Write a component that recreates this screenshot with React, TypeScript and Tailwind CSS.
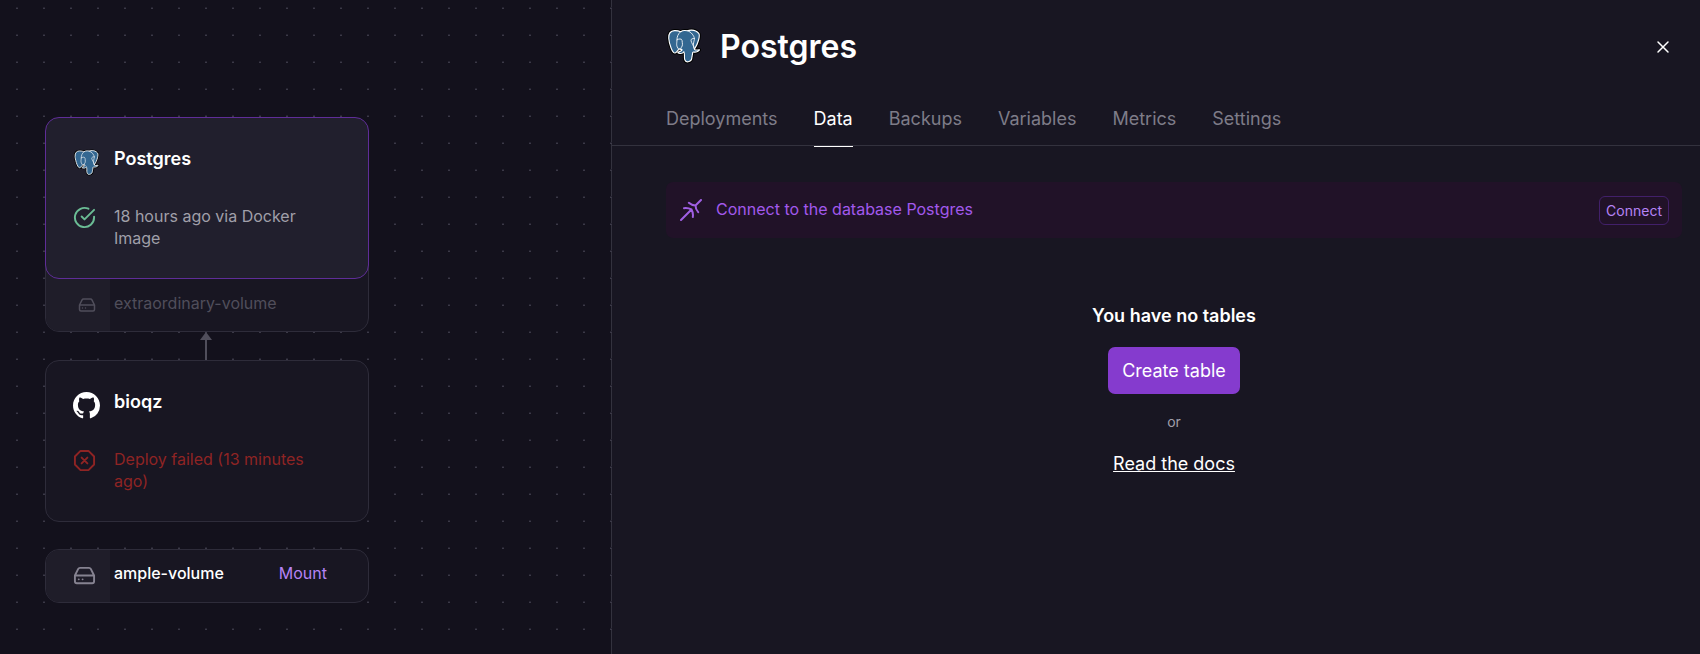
import React from "react";

function PostgresLogo({ className }: { className: string }) {
  const body =
    "M115.731 77.44c-13.925 2.873-14.882-1.842-14.882-1.842 14.703-21.816 20.849-49.51 15.545-56.287-14.47-18.489-39.518-9.746-39.936-9.52l-.134.024c-2.751-.571-5.83-.911-9.291-.967-6.301-.103-11.08 1.652-14.707 4.402 0 0-44.684-18.408-42.605 23.151.442 8.842 12.672 66.899 27.26 49.363 5.332-6.412 10.483-11.834 10.483-11.834 2.559 1.699 5.622 2.567 8.833 2.255l.25-.212c-.078.796-.042 1.575.1 2.497-3.757 4.199-2.653 4.936-10.166 6.482-7.602 1.566-3.136 4.355-.221 5.084 3.535.884 11.712 2.136 17.238-5.598l-.22.882c1.473 1.18 2.507 7.672 2.334 13.557-.174 5.885-.29 9.926.871 13.082 1.16 3.156 2.316 10.256 12.192 8.14 8.252-1.768 12.528-6.351 13.124-13.995.422-5.435 1.377-4.631 1.438-9.49l.767-2.3c.884-7.367.14-9.743 5.225-8.638l1.235.108c3.742.17 8.639-.602 11.514-1.938 6.19-2.871 9.861-7.667 3.758-6.408z";
  return (
    <svg viewBox="0 0 128 128" className={className} aria-hidden="true">
      <path d={body} fill="#000" stroke="#000" strokeWidth="11" strokeLinejoin="round" />
      <path d={body} fill="#336791" stroke="#fff" strokeWidth="4" strokeLinejoin="round" />
      <g fill="none" stroke="#fff" strokeWidth="3" strokeLinecap="round" strokeLinejoin="round">
        <path d="M52 13C43 21 39 30 39 43c0 11-5 20 6 32" />
        <path d="M77 10c13 4 23 18 24 28 0 10-8 17 0 37" />
        <path d="M39 42c6-4 17-5 18 2 1 10 4 18-3 26l-4 8" />
        <path d="M101 37c-7 0-13 2-12 8 2 10 8 14 12 29" />
      </g>
    </svg>
  );
}

function GithubLogo({ className }: { className: string }) {
  return (
    <svg viewBox="0 0 16 16" className={className} fill="currentColor" aria-hidden="true">
      <path d="M8 0C3.58 0 0 3.58 0 8c0 3.54 2.29 6.53 5.47 7.59.4.07.55-.17.55-.38 0-.19-.01-.82-.01-1.49-2.01.37-2.53-.49-2.69-.94-.09-.23-.48-.94-.82-1.13-.28-.15-.68-.52-.01-.53.63-.01 1.08.58 1.23.82.72 1.21 1.87.87 2.33.66.07-.52.28-.87.51-1.07-1.78-.2-3.64-.89-3.64-3.95 0-.87.31-1.59.82-2.15-.08-.2-.36-1.02.08-2.12 0 0 .67-.21 2.2.82.64-.18 1.32-.27 2-.27s1.36.09 2 .27c1.53-1.04 2.2-.82 2.2-.82.44 1.1.16 1.92.08 2.12.51.56.82 1.27.82 2.15 0 3.07-1.87 3.75-3.65 3.95.29.25.54.73.54 1.48 0 1.07-.01 1.93-.01 2.2 0 .21.15.46.55.38A8.01 8.01 0 0 0 16 8c0-4.42-3.58-8-8-8z" />
    </svg>
  );
}

function LineIcon({ className, children }: { className: string; children: React.ReactNode }) {
  return (
    <svg
      viewBox="0 0 24 24"
      className={className}
      fill="none"
      stroke="currentColor"
      strokeWidth="2"
      strokeLinecap="round"
      strokeLinejoin="round"
      aria-hidden="true"
    >
      {children}
    </svg>
  );
}

function DriveIcon({ className }: { className: string }) {
  return (
    <LineIcon className={className}>
      <path d="M22 12H2M5.45 5.11 2 12v6a2 2 0 0 0 2 2h16a2 2 0 0 0 2-2v-6l-3.45-6.89A2 2 0 0 0 16.76 4H7.24a2 2 0 0 0-1.79 1.11zM6 16h.01M10 16h.01" />
    </LineIcon>
  );
}

type ServiceCardProps = {
  name: string;
  status: string;
  logo: React.ReactNode;
  statusIcon: React.ReactNode;
  cardClass: string;
  statusClass: string;
};

function ServiceCard({ name, status, logo, statusIcon, cardClass, statusClass }: ServiceCardProps) {
  return (
    <article className={`relative min-h-[162px] rounded-[14px] border pl-[27px] pr-10 pt-[27px] ${cardClass}`}>
      <div className="flex h-[31px] gap-[14px]">
        <span className="flex w-[27px] shrink-0 items-end justify-center">{logo}</span>
        <h2 className="text-[18px] font-semibold leading-[27px] text-white">{name}</h2>
      </div>
      <div className="mt-[29px] flex gap-[14px]">
        <span className="flex w-[27px] shrink-0 pt-px">{statusIcon}</span>
        <p className={`text-[16px] leading-[22px] ${statusClass}`}>{status}</p>
      </div>
    </article>
  );
}

const tabs = ["Deployments", "Data", "Backups", "Variables", "Metrics", "Settings"];

export default function App() {
  return (
    <div className="flex min-h-screen bg-[#13111c] font-['Inter',sans-serif]">
      <main className="relative w-[36%] shrink-0 pl-[45px] pt-[117px]">
        <svg className="absolute inset-0 h-full w-full" aria-hidden="true">
          <defs>
            <pattern id="dots" width="27" height="27" patternUnits="userSpaceOnUse">
              <rect x="16" y="7" width="2" height="1" fill="#252330" />
              <rect x="16" y="8" width="2" height="1" fill="#3b3947" />
            </pattern>
          </defs>
          <rect width="100%" height="100%" fill="url(#dots)" />
        </svg>
        <div className="relative flex w-[324px] flex-col">
          <ServiceCard
            name="Postgres"
            status="18 hours ago via Docker Image"
            logo={<PostgresLogo className="size-[27px]" />}
            statusIcon={
              <LineIcon className="size-[23px] text-[#6bbd95]">
                <path d="M22 11.08V12a10 10 0 1 1-5.93-9.14" />
                <path d="M22 4 12 14.01l-3-3" />
              </LineIcon>
            }
            cardClass="z-10 border-[#5f2d98] bg-[#211f2d]"
            statusClass="text-[#a09fa9]"
          />
          <div className="-mt-4 flex h-[69px] overflow-hidden rounded-b-[14px] border border-[#2e2c3a] bg-[#181622] text-[#504e5b]">
            <span className="flex w-16 justify-end bg-[#1f1d29] pr-[14px] pt-[32px]">
              <DriveIcon className="size-[18px]" />
            </span>
            <span className="pl-1 pt-7 text-[16px] leading-[22px]">extraordinary-volume</span>
          </div>
          <svg viewBox="0 0 14 28" className="h-7 w-[14px] self-center" aria-hidden="true">
            <path d="M5 7h2v21H5z" fill="#504e5b" />
            <path d="M6 0 12 8H0z" fill="#504e5b" />
          </svg>
          <ServiceCard
            name="bioqz"
            status="Deploy failed (13 minutes ago)"
            logo={<GithubLogo className="size-[27px] text-white" />}
            statusIcon={
              <LineIcon className="size-[23px] text-[#8f2424]">
                <path d="M7.86 2h8.28L22 7.86v8.28L16.14 22H7.86L2 16.14V7.86z" />
                <path d="m15 9-6 6M9 9l6 6" />
              </LineIcon>
            }
            cardClass="border-[#2e2c3a] bg-[#181622]"
            statusClass="text-[#8f2424]"
          />
          <article className="mt-[27px] flex h-[54px] overflow-hidden rounded-[14px] border border-[#2e2c3a] bg-[#181622]">
            <span className="flex w-16 items-center justify-end bg-[#1f1d29] pb-0.5 pr-[14px] text-[#868391]">
              <DriveIcon className="size-[23px]" />
            </span>
            <div className="flex grow justify-between pl-1 pr-[41px] pt-3 text-[16px] leading-[22px]">
              <h2 className="font-medium text-white">ample-volume</h2>
              <button type="button" className="self-start text-[#b583f5]">Mount</button>
            </div>
          </article>
        </div>
      </main>

      <section className="-ml-px min-w-0 flex-1 border-l border-[#33323e] bg-[#181622]">
        <header className="flex items-center justify-between pl-[54px] pr-[25px] pt-6">
          <div className="flex items-center gap-[18px]">
            <PostgresLogo className="mb-0.5 size-9" />
            <h1 className="text-[32px] font-semibold leading-[45px] text-white">Postgres</h1>
          </div>
          <button type="button" aria-label="Close" className="text-white">
            <LineIcon className="size-6">
              <path d="M17 7 7 17M7 7l10 10" strokeWidth="1.5" />
            </LineIcon>
          </button>
        </header>
        <nav className="mt-9 flex gap-9 border-b border-[#33323e] pl-[54px]">
          {tabs.map((tab) => (
            <a
              key={tab}
              href="#"
              aria-current={tab === "Data" ? "page" : undefined}
              className={
                tab === "Data"
                  ? "-mb-0.5 h-[42px] border-b border-white text-[18px] leading-[27px] text-white"
                  : "text-[18px] leading-[27px] text-[#7e7c88]"
              }
            >
              {tab}
            </a>
          ))}
        </nav>
        <div className="pl-[54px] pr-[18px] pt-9">
          <div className="flex h-14 items-center rounded-[7px] bg-[#211228] pl-[14px] pr-[13px]">
            <svg
              viewBox="0 0 22 22"
              className="size-[22px] text-[#a05fe4]"
              fill="none"
              stroke="currentColor"
              strokeWidth="2"
              strokeLinecap="round"
              strokeLinejoin="round"
              aria-hidden="true"
            >
              <path d="M1 21 11.500 10.500M4 9.200q4-.5 7.500 1.300 2 3.500 1.300 7.500" />
              <path d="M21 1l-5.500 5.500M8.800 3.800q3 2.700 6.700 2.700 0 3.700 2.700 6.700" />
            </svg>
            <p className="grow pb-0.5 pl-[14px] text-[16px] leading-6 text-[#a259ec]">Connect to the database Postgres</p>
            <button type="button" className="h-[29px] rounded-[6px] border border-[#42206a] px-1.5 text-[14px] text-[#b583f5]">
              Connect
            </button>
          </div>
          <div className="flex flex-col items-center pt-16">
            <h2 className="text-[18px] font-semibold leading-[27px] text-white">You have no tables</h2>
            <button type="button" className="mt-[18px] h-[47px] rounded-[7px] bg-[#853bce] px-[14px] text-[18px] text-white">
              Create table
            </button>
            <p className="mt-[18px] text-[14px] leading-5 text-[#a09fa9]">or</p>
            <a href="#" className="mt-[18px] text-[18px] leading-[27px] text-white underline">Read the docs</a>
          </div>
        </div>
      </section>
    </div>
  );
}
